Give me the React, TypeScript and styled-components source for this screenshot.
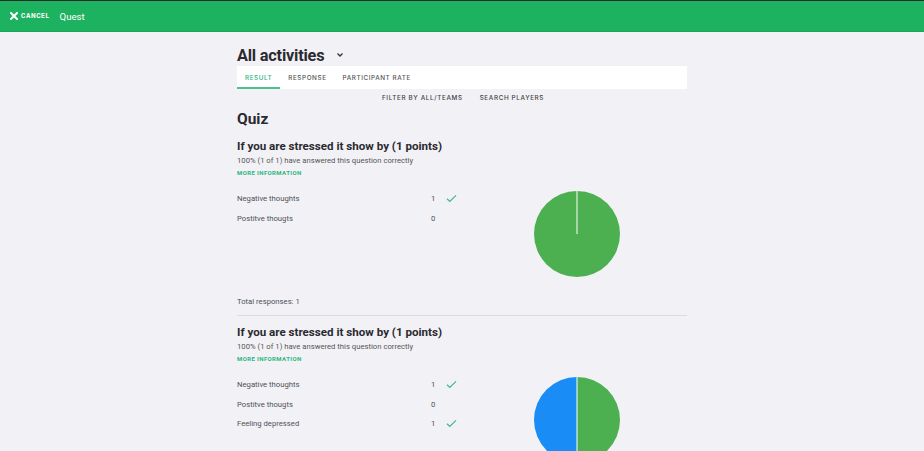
import React from "react";
import styled, { createGlobalStyle } from "styled-components";

const Global = createGlobalStyle`
  html, body { margin: 0; padding: 0; background: #f2f2f6; }
  body { font-family: Roboto, "Noto Sans", Arial, sans-serif; color: #2a2a30; }
  * { box-sizing: border-box; }
`;

const TopBar = styled.header`
  height: 32px;
  border-top: 1px solid #2b2b2b;
  background: #1db260;
  border-bottom: 1px solid #1aa457;
  display: flex;
  align-items: center;
  padding: 0 10px;
  gap: 10px;
`;

const CancelBtn = styled.button`
  all: unset;
  display: flex;
  align-items: center;
  gap: 3px;
  color: #fff;
  font-size: 6.6px;
  font-weight: 700;
  letter-spacing: 0.6px;
  font-family: Roboto, Arial, sans-serif;
`;

const BarTitle = styled.span`
  color: #fff;
  font-size: 9.6px;
  font-weight: 400;
`;

const Main = styled.main`
  width: 450px;
  margin: 0 auto;
  padding-top: 12px;
`;

const TitleRow = styled.div`
  display: flex;
  align-items: center;
  gap: 12px;
  height: 22px;
`;

const PageTitle = styled.h1`
  margin: 0;
  font-size: 16.3px;
  font-weight: 700;
  color: #2a2a30;
  font-family: Roboto, sans-serif;
  letter-spacing: -0.2px;
`;

const Tabs = styled.nav`
  background: #fff;
  height: 23px;
  display: flex;
  align-items: stretch;
`;

const Tab = styled.div<{ $active?: boolean }>`
  padding: 2px 8px 0;
  display: flex;
  align-items: center;
  font-family: Inter, Roboto, sans-serif;
  font-size: 6.3px;
  font-weight: 500;
  letter-spacing: 0.6px;
  color: ${(p) => (p.$active ? "#2bb580" : "#555")};
  border-bottom: 2px solid ${(p) => (p.$active ? "#4cc18e" : "transparent")};
`;

const FilterRow = styled.div`
  height: 18px;
  display: flex;
  justify-content: center;
  align-items: center;
  gap: 17px;
  padding-left: 2px;
`;

const FilterBtn = styled.span`
  font-family: Inter, Roboto, sans-serif;
  font-size: 6.3px;
  font-weight: 500;
  letter-spacing: 0.65px;
  color: #444;
`;

const SectionTitle = styled.h2`
  margin: 0;
  height: 24px;
  line-height: 24px;
  font-size: 15.5px;
  font-weight: 700;
  color: #2a2a30;
`;

const Question = styled.section<{ $divider?: boolean }>`
  padding-top: ${(p) => (p.$divider ? "7px" : "6px")};
  border-top: ${(p) => (p.$divider ? "1px solid #dcdce0" : "none")};
`;

const QTitle = styled.h3`
  margin: 0;
  font-size: 11.6px;
  font-weight: 700;
  line-height: 18px;
  color: #2a2a30;
`;

const QSub = styled.div`
  font-size: 7.7px;
  color: #555;
  line-height: 11px;
`;

const MoreInfo = styled.a`
  display: block;
  font-size: 6px;
  font-weight: 700;
  letter-spacing: 0.4px;
  color: #2bb580;
  line-height: 14px;
`;

const Body = styled.div`
  display: flex;
  margin-top: 9px;
`;

const Answers = styled.div`
  width: 230px;
  display: flex;
  flex-direction: column;
`;

const AnswerRow = styled.div`
  height: 19.6px;
  display: grid;
  grid-template-columns: 194px 15px 12px;
  align-items: center;
  font-size: 7.7px;
  color: #505056;
`;

const Chart = styled.div`
  flex: 1;
  display: flex;
  justify-content: center;
  align-items: flex-start;
  padding-top: 1px;
  height: 106px;
`;

const Total = styled.div`
  font-size: 7.7px;
  color: #505056;
  height: 20px;
  line-height: 14px;
`;

const XIcon = () => (
  <svg width="8" height="8" viewBox="0 0 8 8">
    <path d="M1 1 L7 7 M7 1 L1 7" stroke="#fff" strokeWidth="2" strokeLinecap="square" />
  </svg>
);

const Chevron = () => (
  <svg width="8" height="6" viewBox="0 0 8 6">
    <path d="M1.5 1.5 L4 4 L6.5 1.5" stroke="#333" strokeWidth="1.3" fill="none" />
  </svg>
);

const CheckIcon = () => (
  <svg width="11" height="9" viewBox="0 0 11 9">
    <path d="M1 4.8 L3.8 7.5 L10 1.3" stroke="#3cb98b" strokeWidth="1.2" fill="none" />
  </svg>
);

type Slice = { value: number; color: string };

const Pie = ({ slices }: { slices: Slice[] }) => {
  const total = slices.reduce((s, x) => s + x.value, 0);
  const r = 43;
  const c = 44;
  let angle = 0;
  const paths: React.ReactNode[] = [];
  const lines: React.ReactNode[] = [];
  slices.forEach((s, i) => {
    const frac = s.value / total;
    if (frac === 0) return;
    if (frac >= 1) {
      paths.push(<circle key={i} cx={c} cy={c} r={r} fill={s.color} />);
    } else {
      const a0 = angle * 2 * Math.PI - Math.PI / 2;
      const a1 = (angle + frac) * 2 * Math.PI - Math.PI / 2;
      const x0 = c + r * Math.cos(a0);
      const y0 = c + r * Math.sin(a0);
      const x1 = c + r * Math.cos(a1);
      const y1 = c + r * Math.sin(a1);
      const large = frac > 0.5 ? 1 : 0;
      paths.push(
        <path
          key={i}
          d={`M${c} ${c} L${x0} ${y0} A${r} ${r} 0 ${large} 1 ${x1} ${y1} Z`}
          fill={s.color}
        />
      );
    }
    const a = angle * 2 * Math.PI - Math.PI / 2;
    lines.push(
      <line
        key={"l" + i}
        x1={c}
        y1={c}
        x2={c + r * Math.cos(a)}
        y2={c + r * Math.sin(a)}
        stroke="#fff"
        strokeWidth="1"
      />
    );
    angle += frac;
  });
  return (
    <svg width="88" height="88" viewBox="0 0 88 88">
      {paths}
      {lines}
    </svg>
  );
};

type Answer = { label: string; count: number; correct: boolean };

const QuestionBlock = ({
  answers,
  slices,
  divider,
}: {
  answers: Answer[];
  slices: Slice[];
  divider?: boolean;
}) => (
  <Question $divider={divider}>
    <QTitle>If you are stressed it show by (1 points)</QTitle>
    <QSub>100% (1 of 1) have answered this question correctly</QSub>
    <MoreInfo>MORE INFORMATION</MoreInfo>
    <Body>
      <Answers>
        {answers.map((a) => (
          <AnswerRow key={a.label}>
            <span>{a.label}</span>
            <span>{a.count}</span>
            {a.correct ? <CheckIcon /> : <span />}
          </AnswerRow>
        ))}
      </Answers>
      <Chart>
        <Pie slices={slices} />
      </Chart>
    </Body>
    <Total>Total responses: 1</Total>
  </Question>
);

export default function App() {
  return (
    <>
      <Global />
      <TopBar>
        <CancelBtn>
          <XIcon />
          CANCEL
        </CancelBtn>
        <BarTitle>Quest</BarTitle>
      </TopBar>
      <Main>
        <TitleRow>
          <PageTitle>All activities</PageTitle>
          <Chevron />
        </TitleRow>
        <Tabs>
          <Tab $active>RESULT</Tab>
          <Tab>RESPONSE</Tab>
          <Tab>PARTICIPANT RATE</Tab>
        </Tabs>
        <FilterRow>
          <FilterBtn>FILTER BY ALL/TEAMS</FilterBtn>
          <FilterBtn>SEARCH PLAYERS</FilterBtn>
        </FilterRow>
        <SectionTitle>Quiz</SectionTitle>
        <QuestionBlock
          answers={[
            { label: "Negative thoughts", count: 1, correct: true },
            { label: "Postitve thougts", count: 0, correct: false },
          ]}
          slices={[
            { value: 1, color: "#4caf50" },
            { value: 0, color: "#1e90ff" },
          ]}
        />
        <QuestionBlock
          divider
          answers={[
            { label: "Negative thoughts", count: 1, correct: true },
            { label: "Postitve thougts", count: 0, correct: false },
            { label: "Feeling depressed", count: 1, correct: true },
          ]}
          slices={[
            { value: 1, color: "#4caf50" },
            { value: 0, color: "#ff9800" },
            { value: 1, color: "#1a8cf5" },
          ]}
        />
      </Main>
    </>
  );
}
